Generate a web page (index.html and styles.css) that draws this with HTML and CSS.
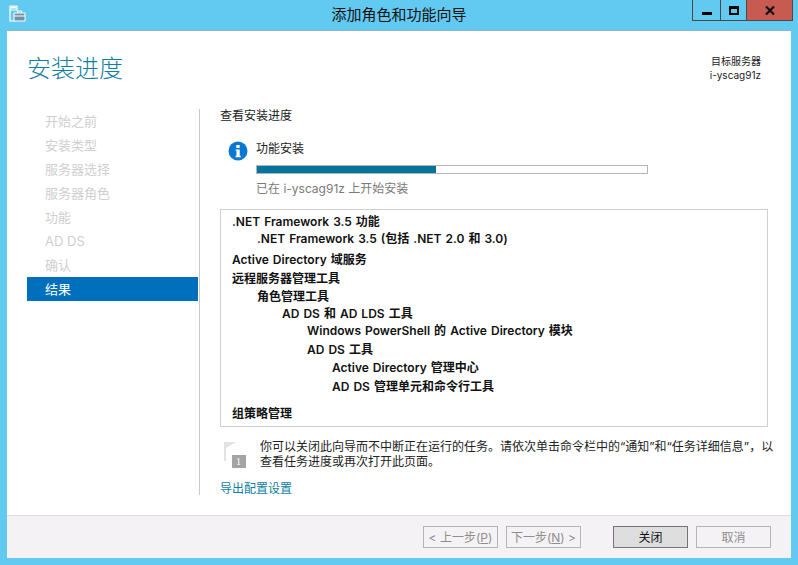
FILE: index.html
```html
<!DOCTYPE html>
<html lang="zh-CN">
<head>
  <meta charset="UTF-8" />
  <title>添加角色和功能向导</title>
  <link rel="stylesheet" href="styles.css">
</head>
<body>
  <div class="window">
    <div class="titlebar">
      <svg class="app-icon" width="17" height="17" viewBox="0 0 17 17">
        <path d="M1 1h7v4H1zM1 5v11h5" fill="#62c9f0" stroke="#fff" stroke-width="1.2"/>
        <path d="M1.5 1.5h6v2h-6z" fill="#fff"/>
        <path d="M5 8h11v8H5z" fill="#6f93a8" stroke="#fff" stroke-width="1"/>
        <path d="M8.5 8V6h4v2" fill="none" stroke="#fff" stroke-width="1"/>
        <path d="M5 11h11" stroke="#fff" stroke-width="1"/>
      </svg>
      <div class="title">添加角色和功能向导</div>
      <div class="controls">
        <div class="ctl ctl-min"><span class="min-glyph"></span></div>
        <div class="ctl ctl-max"><span class="max-glyph"></span></div>
        <div class="ctl ctl-close">
          <svg width="10" height="9" viewBox="0 0 10 9"><path d="M1 .5l8 8M9 .5l-8 8" stroke="#111" stroke-width="2.2" fill="none"/></svg>
        </div>
      </div>
    </div>

    <div class="client">
      <div class="header">
        <h1>安装进度</h1>
        <div class="target">
          <div>目标服务器</div>
          <div>i-yscag91z</div>
        </div>
      </div>

      <div class="main">
        <ul class="steps">
          <li>开始之前</li>
          <li>安装类型</li>
          <li>服务器选择</li>
          <li>服务器角色</li>
          <li>功能</li>
          <li>AD DS</li>
          <li>确认</li>
          <li class="active">结果</li>
        </ul>

        <div class="content">
          <div class="subhead">查看安装进度</div>

          <div class="progress-area">
            <svg class="info-icon" width="20" height="20" viewBox="0 0 20 20">
              <circle cx="10" cy="10" r="9.5" fill="#0a78d2"/>
              <rect x="8.3" y="4" width="3.4" height="3" fill="#fff"/>
              <path d="M7.6 8.4h4.1v6.4h1v1.4H7.6v-1.4h.9V9.8h-.9z" fill="#fff"/>
            </svg>
            <div class="progress-body">
              <div class="progress-label">功能安装</div>
              <div class="bar"><div class="bar-fill" style="width: 46%"></div></div>
              <div class="progress-note">已在 i-yscag91z 上开始安装</div>
            </div>
          </div>

          <div class="feature-box">
            <div class="row r0 short">.NET Framework 3.5 功能</div>
            <div class="row r1 tall">.NET Framework 3.5 (包括 .NET 2.0 和 3.0)</div>
            <div class="row r0 mid">Active Directory 域服务</div>
            <div class="row r0">远程服务器管理工具</div>
            <div class="row r1 short">角色管理工具</div>
            <div class="row r2 short">AD DS 和 AD LDS 工具</div>
            <div class="row r3 mid">Windows PowerShell 的 Active Directory 模块</div>
            <div class="row r3">AD DS 工具</div>
            <div class="row r4 mid">Active Directory 管理中心</div>
            <div class="row r4 last">AD DS 管理单元和命令行工具</div>
            <div class="row r0">组策略管理</div>
          </div>

          <div class="notice">
            <svg class="flag-icon" width="22" height="26" viewBox="0 0 22 26">
              <path d="M0 0v19h2V6L12 0z" fill="#e2e2e2"/>
              <rect x="8" y="13" width="14" height="13" fill="#a5a3a5"/>
            </svg>
            <span class="flag-num">1</span>
            <p>你可以关闭此向导而不中断正在运行的任务。请依次单击命令栏中的“通知”和“任务详细信息”，以查看任务进度或再次打开此页面。</p>
          </div>

          <a class="export-link">导出配置设置</a>
        </div>
      </div>

      <div class="footer">
        <button class="btn" disabled>&lt; 上一步(<u>P</u>)</button>
        <button class="btn" disabled>下一步(<u>N</u>) &gt;</button>
        <button class="btn btn-primary">关闭</button>
        <button class="btn" disabled>取消</button>
      </div>
    </div>
  </div>
</body>
</html>
```

FILE: styles.css
```css
* {
  box-sizing: border-box;
}
html, body {
  margin: 0;
  height: 100%;
  overflow: hidden;
}
body {
  font-family: Inter, "Noto Sans CJK SC", sans-serif;
  font-size: 12px;
  color: #222;
}
.window {
  width: 798px;
  height: 565px;
  background: #62c9f0;
  padding: 0 7px 7px;
  display: flex;
  flex-direction: column;
}
.titlebar {
  height: 30px;
  margin: 0 -2px 0 -2px;
  display: grid;
  grid-template-columns: 1fr auto 1fr;
  align-items: start;
  flex: none;
}
.app-icon {
  margin: 5px 0 0 4px;
}
.title {
  font-size: 15px;
  line-height: 30px;
  color: #111;
}
.controls {
  justify-self: end;
  display: flex;
  height: 21px;
  border: 1px solid #4a4a4a;
  border-top: 0;
  width: 101px;
}
.ctl {
  display: flex;
  align-items: center;
  justify-content: center;
}
.ctl-min {
  width: 28px;
  border-right: 1px solid #4a4a4a;
}
.ctl-max {
  width: 26px;
  border-right: 1px solid #4a4a4a;
}
.ctl-close {
  flex: 1;
  background: #c75b52;
}
.min-glyph {
  width: 10px;
  height: 3px;
  background: #000;
  margin-top: 6px;
}
.max-glyph {
  width: 10px;
  height: 9px;
  border: 2px solid #000;
  border-top-width: 3px;
}
.client {
  flex: 1;
  background: #fff;
  border-top: 1px solid #8fb4c6;
  display: flex;
  flex-direction: column;
  min-height: 0;
}
.header {
  height: 78px;
  padding: 18px 30px 0 20px;
  display: flex;
  justify-content: space-between;
  flex: none;
}
h1 {
  margin: 0;
  font-size: 24px;
  font-weight: 300;
  line-height: 40px;
  color: #0f7ea3;
}
.target {
  font-size: 10px;
  line-height: 14px;
  margin-top: 5px;
  text-align: right;
}
.main {
  flex: 1;
  display: flex;
  min-height: 0;
}
.steps {
  list-style: none;
  margin: 0 0 0 20px;
  padding: 0 1px 0 0;
  width: 173px;
  height: 386px;
  border-right: 1px solid #c9c9c9;
  flex: none;
}
.steps li {
  height: 24px;
  line-height: 24px;
  padding-left: 18px;
  font-size: 13px;
  color: #cfcfcf;
}
.steps li.active {
  background: #0070bc;
  color: #fff;
}
.content {
  flex: none;
  width: 548px;
  margin-left: 20px;
}
.subhead {
  line-height: 16px;
  height: 16px;
  margin-top: -1px;
}
.progress-area {
  display: flex;
  margin: 15px 0 0 8px;
}
.info-icon {
  margin-top: 2px;
  flex: none;
}
.progress-body {
  margin-left: 8px;
  width: 392px;
}
.progress-label {
  line-height: 16px;
  margin-top: 2px;
}
.bar {
  height: 9px;
  margin-top: 8px;
  border: 1px solid #b4b4b4;
  background: #fff;
}
.bar-fill {
  height: 100%;
  background: #04749c;
}
.progress-note {
  margin-top: 7px;
  line-height: 16px;
  color: #7a7a7a;
}
.feature-box {
  height: 218px;
  margin-top: 12px;
  border: 1px solid #cfcfcf;
  padding-top: 3px;
}
.row {
  height: 18px;
  line-height: 18px;
  font-weight: 600;
  word-spacing: 1px;
  color: #111;
}
.short { height: 17px; }
.mid { height: 19px; }
.tall { height: 21px; }
.last { height: 27px; }
.r0 { padding-left: 11px; }
.r1 { padding-left: 36px; }
.r2 { padding-left: 61px; }
.r3 { padding-left: 86px; }
.r4 { padding-left: 111px; }
.notice {
  position: relative;
  display: flex;
  margin-top: 12px;
  padding-left: 4px;
}
.flag-icon {
  flex: none;
  margin-top: 3px;
}
.flag-num {
  position: absolute;
  left: 16px;
  top: 16px;
  font-family: "Liberation Serif", serif;
  font-size: 10px;
  line-height: 13px;
  color: #fff;
}
.notice p {
  flex: none;
  margin: 0 0 0 14px;
  line-height: 15px;
  width: 515px;
}
.export-link {
  display: block;
  margin-top: 12px;
  line-height: 16px;
  color: #0f7ea3;
}
.footer {
  height: 43px;
  flex: none;
  background: #f5f2f5;
  border-top: 1px solid #dedcde;
  display: flex;
  align-items: flex-start;
  padding: 10px 0 0 416px;
}
.btn {
  width: 75px;
  height: 22px;
  padding: 1px 0 0;
  margin-right: 8px;
  font-family: inherit;
  font-size: 12px;
  line-height: 18px;
  background: #f5f2f5;
  border: 1px solid #b5b5b5;
  color: #8e8e8e;
}
.btn + .btn-primary {
  margin-left: 24px;
  background: #dedede;
  border-color: #757575;
  color: #111;
}
```
